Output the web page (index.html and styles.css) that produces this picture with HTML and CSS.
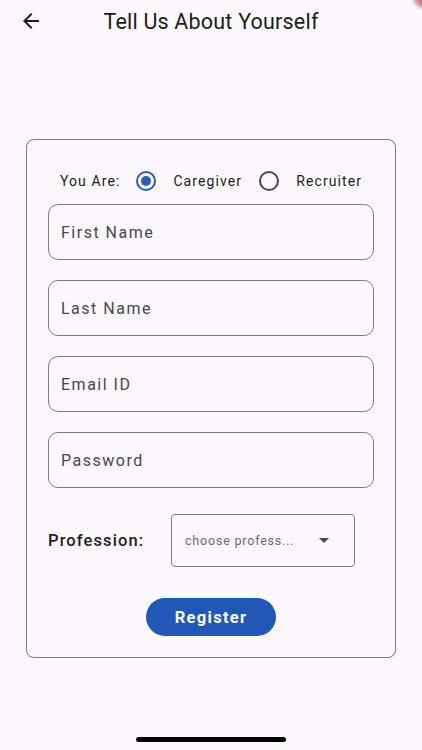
FILE: index.html
```html
<!DOCTYPE html>
<html lang="en">
<head>
<meta charset="utf-8">
<title>Tell Us About Yourself</title>
<link rel="stylesheet" href="styles.css">
</head>
<body>
<div class="screen">
  <div class="corner-glow"></div>
  <header class="appbar">
    <button class="back" aria-label="Back">
      <svg width="24" height="24" viewBox="0 0 24 24"><path d="M20 11H7.83l5.59-5.59L12 4l-8 8 8 8 1.41-1.41L7.83 13H20v-2z" fill="#1d1b20"/></svg>
    </button>
    <h1 class="title">Tell Us About Yourself</h1>
  </header>

  <main class="card">
    <div class="role-row">
      <span class="role-label">You Are:</span>
      <span class="radio checked"><span class="dot"></span></span>
      <span class="role-option">Caregiver</span>
      <span class="radio"></span>
      <span class="role-option">Recruiter</span>
    </div>

    <div class="fields">
      <div class="field"><span class="placeholder">First Name</span></div>
      <div class="field"><span class="placeholder">Last Name</span></div>
      <div class="field"><span class="placeholder">Email ID</span></div>
      <div class="field"><span class="placeholder">Password</span></div>
    </div>

    <div class="profession-row">
      <span class="profession-label">Profession:</span>
      <div class="select">
        <span class="select-text">choose profess...</span>
        <svg class="caret" width="10" height="5" viewBox="0 0 10 5"><path d="M0 0h10L5 5z" fill="#49454f"/></svg>
      </div>
    </div>

    <div class="actions">
      <button class="register">Register</button>
    </div>
  </main>

  <div class="home-indicator"></div>
</div>
</body>
</html>
```

FILE: styles.css
```css
* { box-sizing: border-box; }

html, body {
  margin: 0;
  padding: 0;
  background: #fdf8fd;
}

body {
  font-family: Roboto, "Noto Sans", "Liberation Sans", sans-serif;
  color: #1d1b20;
}

.screen {
  position: relative;
  width: 422px;
  height: 750px;
  overflow: hidden;
  display: flex;
  flex-direction: column;
  align-items: center;
}

.corner-glow {
  position: absolute;
  top: -14px;
  right: -14px;
  width: 22px;
  height: 22px;
  border-radius: 50%;
  background: #b06070;
  filter: blur(2px);
  opacity: 0.8;
}

.appbar {
  width: 100%;
  height: 42px;
  display: flex;
  align-items: center;
  position: relative;
  padding-left: 19px;
}

.back {
  border: none;
  background: none;
  padding: 0;
  width: 24px;
  height: 24px;
  display: flex;
  align-items: center;
  justify-content: center;
}

.title {
  margin: 0;
  flex: 1;
  text-align: center;
  font-size: 21.5px;
  font-weight: 400;
  letter-spacing: 0.2px;
  padding-right: 43px;
  color: #1d1b20;
}

.card {
  margin-top: 97px;
  width: 370px;
  border: 1px solid #7d7a80;
  border-radius: 8px;
  padding: 27px 21px 21px 21px;
  display: flex;
  flex-direction: column;
}

.role-row {
  height: 28px;
  display: flex;
  align-items: center;
  justify-content: center;
  font-size: 14px;
  letter-spacing: 1.1px;
  color: #1d1b20;
}

.role-label { margin-right: 16px; }
.role-option { margin: 0 17px; }
.role-option:last-child { margin-right: 0; }

.radio {
  width: 20px;
  height: 20px;
  border-radius: 50%;
  border: 2px solid #49454f;
  display: flex;
  align-items: center;
  justify-content: center;
}

.radio.checked { border-color: #2a5db3; }

.dot {
  width: 10px;
  height: 10px;
  border-radius: 50%;
  background: #2a5db3;
}

.fields {
  margin-top: 9px;
  display: flex;
  flex-direction: column;
  gap: 20px;
}

.field {
  height: 56px;
  border: 1px solid #7d7a80;
  border-radius: 10px;
  display: flex;
  align-items: center;
  padding-left: 12px;
}

.placeholder {
  font-size: 16px;
  letter-spacing: 1.5px;
  color: #49454f;
}

.profession-row {
  margin-top: 26px;
  display: flex;
  align-items: center;
}

.profession-label {
  font-size: 16.5px;
  font-weight: 500;
  letter-spacing: 1.1px;
  color: #1d1b20;
  width: 123px;
}

.select {
  width: 184px;
  height: 53px;
  border: 1px solid #7d7a80;
  border-radius: 4px;
  display: flex;
  align-items: center;
  padding-left: 13px;
  padding-right: 25px;
}

.select-text {
  flex: 1;
  font-size: 12.5px;
  letter-spacing: 0.8px;
  color: #6b6870;
}

.caret { display: block; }

.actions {
  margin-top: 31px;
  display: flex;
  justify-content: center;
}

.register {
  width: 130px;
  height: 38px;
  border: none;
  border-radius: 19px;
  background: #2257b8;
  color: #ffffff;
  font-family: Roboto, "Noto Sans", "Liberation Sans", sans-serif;
  font-size: 16.5px;
  font-weight: 700;
  letter-spacing: 1.3px;
}

.home-indicator {
  margin-top: auto;
  margin-bottom: 8px;
  width: 150px;
  height: 5px;
  border-radius: 3px;
  background: #000000;
}
```
